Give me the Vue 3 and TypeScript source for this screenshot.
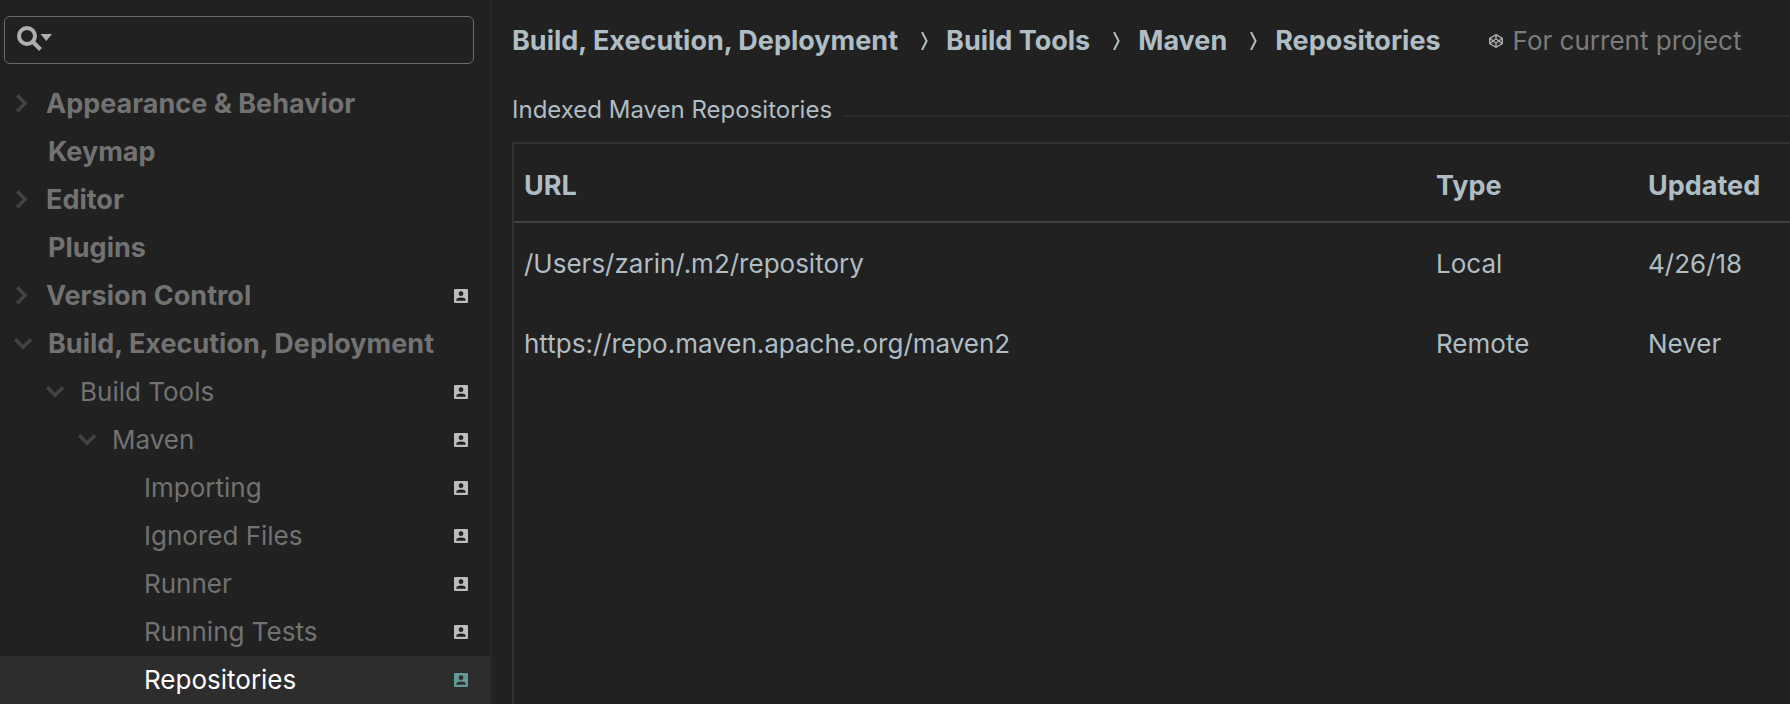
<script setup lang="ts">
import { ref } from 'vue'

interface TreeItem {
  label: string
  level: number
  state?: 'collapsed' | 'expanded'
  project?: boolean
}

interface Repository {
  url: string
  type: string
  updated: string
}

const items: TreeItem[] = [
  { label: 'Appearance & Behavior', level: 0, state: 'collapsed' },
  { label: 'Keymap', level: 0 },
  { label: 'Editor', level: 0, state: 'collapsed' },
  { label: 'Plugins', level: 0 },
  { label: 'Version Control', level: 0, state: 'collapsed', project: true },
  { label: 'Build, Execution, Deployment', level: 0, state: 'expanded' },
  { label: 'Build Tools', level: 1, state: 'expanded', project: true },
  { label: 'Maven', level: 2, state: 'expanded', project: true },
  { label: 'Importing', level: 3, project: true },
  { label: 'Ignored Files', level: 3, project: true },
  { label: 'Runner', level: 3, project: true },
  { label: 'Running Tests', level: 3, project: true },
  { label: 'Repositories', level: 3, project: true },
]

const crumbs: string[] = ['Build, Execution, Deployment', 'Build Tools', 'Maven', 'Repositories']

const repositories: Repository[] = [
  { url: '/Users/zarin/.m2/repository', type: 'Local', updated: '4/26/18' },
  { url: 'https://repo.maven.apache.org/maven2', type: 'Remote', updated: 'Never' },
]

const query = ref('')
const selected = ref('Repositories')
</script>

<template>
  <div class="settings">
    <aside class="sidebar">
      <label class="search">
        <svg class="search-icon" width="36" height="26" viewBox="0 0 36 26" aria-hidden="true">
          <circle cx="10" cy="10" r="8" fill="none" stroke="#afafaf" stroke-width="4" />
          <path d="M15.5 15.5L23.5 23.5" stroke="#afafaf" stroke-width="4" />
          <path d="M23.5 8H35L29.3 15Z" fill="#afafaf" />
        </svg>
        <input v-model="query" class="search-input" type="text" aria-label="Search settings" />
      </label>
      <nav class="tree" aria-label="Settings">
        <button
          v-for="item in items"
          :key="item.label"
          type="button"
          class="row"
          :class="['level-' + item.level, item.state, { selected: selected === item.label }]"
          :aria-expanded="item.state ? item.state === 'expanded' : undefined"
          @click="selected = item.label"
        >
          <span class="arrow">
            <svg v-if="item.state === 'collapsed'" width="20" height="20" viewBox="0 0 20 20" aria-hidden="true">
              <path d="M3.2 1.2L11.2 9.2L3.2 17.2" fill="none" stroke="#434343" stroke-width="3.4" />
            </svg>
            <svg v-else-if="item.state === 'expanded'" width="20" height="20" viewBox="0 0 20 20" aria-hidden="true">
              <path d="M1.2 5.2L9.2 13.2L17.2 5.2" fill="none" stroke="#434343" stroke-width="3.4" />
            </svg>
          </span>
          <span class="label">{{ item.label }}</span>
          <svg v-if="item.project" class="badge" width="14" height="14" viewBox="0 0 14 14" aria-hidden="true">
            <path
              fill="currentColor"
              fill-rule="evenodd"
              d="M1 0H13Q14 0 14 1V13Q14 14 13 14H1Q0 14 0 13V1Q0 0 1 0ZM7 2.3A2.4 2.4 0 1 0 7 7.1A2.4 2.4 0 1 0 7 2.3ZM2.3 11.7H11.7V10.9C11.7 9.3 9.2 8.6 7 8.6C4.8 8.6 2.3 9.3 2.3 10.9Z"
            />
          </svg>
        </button>
      </nav>
    </aside>

    <main class="content">
      <header class="header">
        <nav class="crumbs" aria-label="Breadcrumb">
          <template v-for="(crumb, index) in crumbs" :key="crumb">
            <svg v-if="index > 0" class="separator" width="8" height="18" viewBox="0 0 8 18" aria-hidden="true">
              <path d="M1 0L5.6 9L1 18" fill="none" stroke="#afbdc4" stroke-width="2" />
            </svg>
            <a class="crumb" href="#">{{ crumb }}</a>
          </template>
        </nav>
        <span class="scope">
          <svg width="14" height="14" viewBox="0 0 14 14" fill="none" stroke="#afafaf" stroke-width="1.4" aria-hidden="true">
            <path d="M7 0.7L13.3 4.3V9.7L7 13.3L0.7 9.7V4.3Z" />
            <path d="M0.7 4.3L7 9.2L13.3 4.3M0.7 9.7L7 4.8L13.3 9.7M7 0.7V4.8M7 9.2V13.3" />
          </svg>
          For current project
        </span>
      </header>

      <section class="group">
        <h2 class="group-title">Indexed Maven Repositories</h2>
        <div class="table-box">
          <table class="table">
            <thead>
              <tr>
                <th class="url" scope="col">URL</th>
                <th class="type" scope="col">Type</th>
                <th class="updated" scope="col">Updated</th>
              </tr>
            </thead>
            <tbody>
              <tr v-for="repository in repositories" :key="repository.url">
                <td>{{ repository.url }}</td>
                <td>{{ repository.type }}</td>
                <td>{{ repository.updated }}</td>
              </tr>
            </tbody>
          </table>
        </div>
      </section>
    </main>
  </div>
</template>

<style>
body {
  margin: 0;
  background: #212121;
}
</style>

<style scoped>
.settings {
  display: flex;
  min-height: 100vh;
  background: #212121;
  color: #afbdc4;
  font-family: Inter, Roboto, sans-serif;
  font-size: 26px;
  line-height: 32px;
}

.sidebar {
  box-sizing: border-box;
  flex: 0 0 492px;
  min-width: 0;
  padding-top: 16px;
  border-right: 2px solid #282828;
}

.search {
  display: flex;
  align-items: center;
  box-sizing: border-box;
  height: 48px;
  margin: 0 16px 16px 4px;
  padding: 0 12px;
  border: 1px solid #6a6a6a;
  border-radius: 6px;
}

.search-icon {
  flex: none;
  margin-bottom: 2px;
}

.search-input {
  flex: 1;
  min-width: 0;
  padding: 0 8px;
  border: 0;
  outline: 0;
  background: transparent;
  color: #afbdc4;
  font: inherit;
}

.row {
  display: flex;
  align-items: center;
  width: 100%;
  height: 48px;
  padding: 0 22px 0 14px;
  border: 0;
  background: transparent;
  color: #727272;
  font: inherit;
  text-align: left;
  cursor: pointer;
}

.level-0 {
  font-size: 27px;
  font-weight: 700;
}

.level-1 {
  padding-left: 46px;
}

.level-2 {
  padding-left: 78px;
}

.level-3 {
  padding-left: 110px;
}

.arrow {
  display: flex;
  flex: 0 0 34px;
}

.collapsed .arrow {
  flex-basis: 32px;
}

.label {
  flex: 1;
  white-space: nowrap;
}

.badge {
  flex: none;
  color: #bdbdbd;
}

.selected {
  background: #2d2d2d;
  color: #ffffff;
}

.selected .badge {
  color: #5f9a94;
}

.content {
  display: flex;
  flex: 1;
  flex-direction: column;
  min-width: 0;
  padding-left: 20px;
}

.header {
  display: flex;
  align-items: center;
  gap: 48px;
  padding-top: 25px;
  white-space: nowrap;
}

.crumbs {
  display: flex;
  align-items: center;
}

.crumb {
  color: inherit;
  font-size: 27px;
  font-weight: 700;
  text-decoration: none;
}

.separator {
  margin: 0 17px 0 23px;
}

.scope {
  display: flex;
  align-items: center;
  gap: 10px;
  color: #7c7c7c;
}

.group {
  display: flex;
  flex: 1;
  flex-direction: column;
  padding-top: 37px;
}

.group-title {
  display: flex;
  align-items: center;
  gap: 10px;
  margin: 0 0 16px;
  font-size: 24px;
  font-weight: 400;
  line-height: 32px;
  white-space: nowrap;
}

.group-title::after {
  flex: 1;
  height: 2px;
  margin-top: 12px;
  background: #2a2a2a;
  content: '';
}

.table-box {
  flex: 1;
  border-top: 2px solid #333333;
  border-left: 2px solid #333333;
}

.table {
  width: 100%;
  border-collapse: separate;
  border-spacing: 0;
  table-layout: fixed;
}

th,
td {
  height: 80px;
  padding: 2px 0 0 10px;
  box-sizing: border-box;
  text-align: left;
  vertical-align: middle;
  white-space: nowrap;
}

th {
  height: 79px;
  padding-top: 6px;
  border-bottom: 2px solid #424242;
  font-size: 27px;
  font-weight: 700;
}

.type {
  width: 212px;
}

.updated {
  width: 152px;
}
</style>
